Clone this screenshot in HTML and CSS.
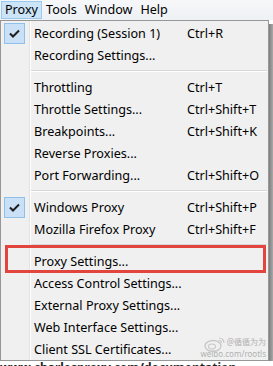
FILE: index.html
```html
<!DOCTYPE html>
<html>
<head>
<meta charset="utf-8">
<link rel="stylesheet" href="styles.css">
</head>
<body>
<div class="screen">
  <div class="menubar">
    <span class="mb-item active">Proxy</span>
    <span class="mb-item">Tools</span>
    <span class="mb-item">Window</span>
    <span class="mb-item">Help</span>
  </div>
  <div class="menu-wrap">
    <div class="menu">
      <div class="row"><span class="gut"><span class="check"><svg width="11" height="9" viewBox="0 0 11 9"><path d="M1 4.5 L4 7.5 L10 1.5" fill="none" stroke="#1e1e1e" stroke-width="2"/></svg></span></span><span class="lbl">Recording (Session 1)</span><span class="sc">Ctrl+R</span></div>
      <div class="row"><span class="gut"></span><span class="lbl">Recording Settings...</span><span class="sc"></span></div>
      <div class="sep"></div>
      <div class="row"><span class="gut"></span><span class="lbl">Throttling</span><span class="sc">Ctrl+T</span></div>
      <div class="row"><span class="gut"></span><span class="lbl">Throttle Settings...</span><span class="sc">Ctrl+Shift+T</span></div>
      <div class="row"><span class="gut"></span><span class="lbl">Breakpoints...</span><span class="sc">Ctrl+Shift+K</span></div>
      <div class="row"><span class="gut"></span><span class="lbl">Reverse Proxies...</span><span class="sc"></span></div>
      <div class="row"><span class="gut"></span><span class="lbl">Port Forwarding...</span><span class="sc">Ctrl+Shift+O</span></div>
      <div class="sep"></div>
      <div class="row"><span class="gut"><span class="check"><svg width="11" height="9" viewBox="0 0 11 9"><path d="M1 4.5 L4 7.5 L10 1.5" fill="none" stroke="#1e1e1e" stroke-width="2"/></svg></span></span><span class="lbl">Windows Proxy</span><span class="sc">Ctrl+Shift+P</span></div>
      <div class="row"><span class="gut"></span><span class="lbl">Mozilla Firefox Proxy</span><span class="sc">Ctrl+Shift+F</span></div>
      <div class="sep"></div>
      <div class="row"><span class="gut"></span><span class="lbl">Proxy Settings...</span><span class="sc"></span></div>
      <div class="row"><span class="gut"></span><span class="lbl">Access Control Settings...</span><span class="sc"></span></div>
      <div class="row"><span class="gut"></span><span class="lbl">External Proxy Settings...</span><span class="sc"></span></div>
      <div class="row"><span class="gut"></span><span class="lbl">Web Interface Settings...</span><span class="sc"></span></div>
      <div class="row"><span class="gut"></span><span class="lbl">Client SSL Certificates...</span><span class="sc"></span></div>
    </div>
    <div class="shadow"></div>
    <div class="highlight-box"></div>
    <div class="watermark">
      <svg class="wb-logo" width="22" height="16" viewBox="0 0 22 16"><ellipse cx="9" cy="10" rx="8" ry="5.5" fill="none" stroke="#c8c8c8" stroke-width="1.3"/><ellipse cx="8" cy="10.5" rx="3.5" ry="2.5" fill="none" stroke="#c8c8c8" stroke-width="1.1"/><path d="M15 2 a5 5 0 0 1 5 5" fill="none" stroke="#c8c8c8" stroke-width="1.2"/><path d="M14.5 4.5 a2.5 2.5 0 0 1 3 2.5" fill="none" stroke="#c8c8c8" stroke-width="1.1"/></svg>
      <div class="wb-name">@循循为为</div>
      <div class="wb-url">weibo.com/rootls</div>
    </div>
  </div>
  <div class="below"><span>www.charlesproxy.com/documentation</span></div>
</div>
</body>
</html>
```
FILE: styles.css
```css
html, body {
  margin: 0;
  padding: 0;
  background: #fff;
}
.screen {
  width: 273px;
  height: 366px;
  overflow: hidden;
  font-family: "Noto Sans", "Noto Sans CJK SC", sans-serif;
  font-size: 12.6px;
  color: #000;
}
.menubar {
  height: 20px;
  display: flex;
  align-items: stretch;
  padding-left: 1px;
  background: linear-gradient(#f6f7f9, #eef1f5);
  box-sizing: border-box;
}
.mb-item {
  display: flex;
  align-items: center;
  padding: 0 3px 0 3px;
  border: 1px solid transparent;
  margin-top: 1px;
  height: 18px;
  box-sizing: border-box;
  line-height: 1;
}
.mb-item.active {
  background: #cce4f7;
  border-color: #99c9ef;
}
.menu-wrap {
  position: relative;
  display: flex;
  height: 341px;
}
.menu {
  width: 269px;
  box-sizing: border-box;
  border: 1px solid #979797;
  padding: 1px;
  background-color: #f0f0f0;
  background-image: linear-gradient(to right, transparent 28px, #e2e2e2 28px, #e2e2e2 29px, #ffffff 29px, #ffffff 30px, transparent 30px);
}
.shadow {
  width: 4px;
  background: linear-gradient(to right, #808080, #a8a8a8);
  margin-top: 4px;
}
.row {
  height: 22px;
  display: grid;
  grid-template-columns: 32px 153px 1fr;
  align-items: center;
  white-space: nowrap;
}
.gut {
  height: 22px;
  display: flex;
  align-items: flex-start;
}
.check {
  width: 21px;
  height: 21px;
  margin-left: 2px;
  margin-top: 1px;
  box-sizing: border-box;
  border: 1px solid #8ec0ea;
  background: #c9e0f7;
  display: flex;
  align-items: center;
  justify-content: center;
}
.sep {
  height: 10px;
  margin-left: 29px;
  box-sizing: border-box;
  padding-top: 4px;
}
.sep::before {
  content: "";
  display: block;
  height: 1px;
  background: #d7d7d7;
  border-bottom: 1px solid #fff;
}
.highlight-box {
  position: absolute;
  left: 5px;
  top: 225px;
  width: 261px;
  height: 28px;
  box-sizing: border-box;
  border: 3px solid #e2443e;
}
.watermark {
  position: absolute;
  right: 7px;
  top: 316px;
  display: flex;
  flex-direction: column;
  align-items: flex-end;
  font-size: 8px;
  line-height: 12px;
  color: #b0b0b0;
  white-space: nowrap;
}
.wb-logo {
  position: absolute;
  left: 4px;
  top: 0;
}
.below {
  height: 5px;
  overflow: hidden;
  background: #fff;
  font-size: 12px;
  line-height: 12px;
  color: #222;
}
.below span {
  display: block;
  margin-top: 1px;
  font-weight: bold;
  white-space: nowrap;
}
```
